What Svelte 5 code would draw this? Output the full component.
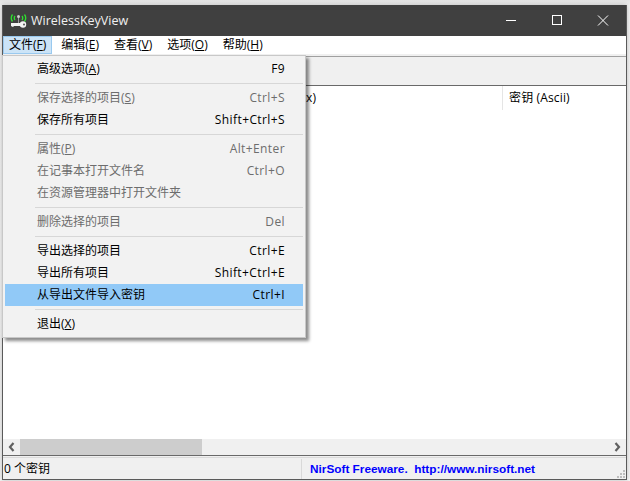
<script>
  const menus = [
    ['文件(', 'F', ')'], ['编辑(', 'E', ')'], ['查看(', 'V', ')'], ['选项(', 'O', ')'], ['帮助(', 'H', ')']
  ];
  const groups = [
    [{ t: '高级选项(', k: 'A', e: ')', s: 'F9' }],
    [
      { t: '保存选择的项目(', k: 'S', e: ')', s: 'Ctrl+S', off: true },
      { t: '保存所有项目', s: 'Shift+Ctrl+S' }
    ],
    [
      { t: '属性(', k: 'P', e: ')', s: 'Alt+Enter', off: true },
      { t: '在记事本打开文件名', s: 'Ctrl+O', off: true },
      { t: '在资源管理器中打开文件夹', off: true }
    ],
    [{ t: '删除选择的项目', s: 'Del', off: true }],
    [
      { t: '导出选择的项目', s: 'Ctrl+E' },
      { t: '导出所有项目', s: 'Shift+Ctrl+E' },
      { t: '从导出文件导入密钥', s: 'Ctrl+I', hot: true }
    ],
    [{ t: '退出(', k: 'X', e: ')' }]
  ];
</script>

<div class="screen">
  <div class="window">
    <header class="title">
      <svg class="logo" width="18" height="16" viewBox="0 0 18 16">
        <path d="M2.500 1.500Q0 5 2.500 8.500M5 3Q3.500 5 5 7M12 3Q13.500 5 12 7M14.500 1.500Q17 5 14.500 8.500" fill="none" stroke="#2fe02f" stroke-width="1.300"/>
        <rect x="8" y="4" width="1" height="6" fill="#9a9a9a"/>
        <circle cx="8.500" cy="3.500" r="1.500" fill="#cfcfcf"/>
        <path d="M1 10h9v3H4l-1 1-2-1z" fill="#f4f4f4"/>
        <circle cx="13" cy="11.500" r="3.200" fill="#f4f4f4"/>
        <circle cx="14" cy="11.500" r="1" fill="#555"/>
      </svg>
      <span class="name">WirelessKeyView</span>
      <div class="controls">
        <svg class="ctl" width="46" height="31" viewBox="0 0 46 31"><path d="M18 15.500h10" stroke="#fff"/></svg>
        <svg class="ctl" width="46" height="31" viewBox="0 0 46 31"><rect x="18.500" y="10.500" width="9" height="9" fill="none" stroke="#fff"/></svg>
        <svg class="ctl" width="46" height="31" viewBox="0 0 46 31"><path d="M18 10.500l10 10M28 10.500l-10 10" stroke="#fff" fill="none"/></svg>
      </div>
    </header>

    <nav class="menubar">
      {#each menus as m, i}
        <span class="top" class:open={i === 0}>{m[0]}<u>{m[1]}</u>{m[2]}</span>
      {/each}
    </nav>

    <div class="toolbar"></div>

    <div class="list">
      <div class="heads">
        <span class="head wide">x)</span>
        <span class="head">密钥 (Ascii)</span>
      </div>
      <div class="rows"></div>
      <div class="hscroll">
        <svg width="17" height="16" viewBox="0 0 17 16"><path d="M10.500 4L7 8l3.500 4" fill="none" stroke="#606060" stroke-width="2.200"/></svg>
        <div class="track"><div class="thumb"></div></div>
        <svg width="17" height="16" viewBox="0 0 17 16"><path d="M6.500 4L10 8l-3.500 4" fill="none" stroke="#606060" stroke-width="2.200"/></svg>
      </div>
    </div>

    <footer class="status">
      <span class="count">0 个密钥</span>
      <span class="link">NirSoft Freeware.&nbsp; http://www.nirsoft.net</span>
      <svg class="grip" width="10" height="10" viewBox="0 0 10 10" fill="#bdbdbd">
        <rect x="7" y="1" width="2" height="2"/><rect x="4" y="4" width="2" height="2"/><rect x="7" y="4" width="2" height="2"/>
        <rect x="1" y="7" width="2" height="2"/><rect x="4" y="7" width="2" height="2"/><rect x="7" y="7" width="2" height="2"/>
      </svg>
    </footer>

    <div class="menu">
      {#each groups as g, gi}
        {#if gi > 0}<div class="sep"></div>{/if}
        {#each g as it}
          <div class="item" class:off={it.off} class:hot={it.hot}>
            <span>{it.t}{#if it.k}<u>{it.k}</u>{it.e}{/if}</span>
            {#if it.s}<span class="keys">{it.s}</span>{/if}
          </div>
        {/each}
      {/each}
    </div>
  </div>
</div>

<style>
  :global(body) {
    margin: 0;
  }
  .screen {
    width: 630px;
    height: 481px;
    box-sizing: border-box;
    padding: 5px 3px 1px 2px;
    background: linear-gradient(#e4e4e4, #f4f4f4 6px, #f6f6f6);
    font-family: "Open Sans", "Noto Sans CJK SC", sans-serif;
    font-size: 12px;
    color: #000;
    overflow: hidden;
  }
  .window {
    position: relative;
    height: 475px;
    display: flex;
    flex-direction: column;
    box-sizing: border-box;
    border: solid #5a5a5a;
    border-width: 0 1px 1px;
    background: #f0f0f0;
    box-shadow: 0 0 5px rgba(0, 0, 0, 0.25);
  }
  .title {
    height: 31px;
    flex: none;
    display: flex;
    align-items: center;
    padding-left: 7px;
    background: #404040;
    color: #f0f0f0;
  }
  .logo {
    margin-right: 3px;
  }
  .name {
    font-size: 12.500px;
  }
  .controls {
    margin-left: auto;
    display: flex;
  }
  .ctl {
    display: block;
  }
  .menubar {
    height: 18px;
    flex: none;
    display: flex;
    background: #fff;
  }
  .top {
    height: 18px;
    line-height: 18px;
    padding: 0 6px;
    margin-right: 3px;
    box-sizing: border-box;
  }
  .top.open {
    background: #cce4f7;
    border: 1px solid #99c9ef;
    line-height: 16px;
    padding: 0 5px;
  }
  .toolbar {
    height: 29px;
    flex: none;
    margin-top: 2px;
    background: #f0f0f0;
    border-top: 1px solid #a0a0a0;
    box-sizing: border-box;
  }
  .list {
    flex: 1;
    display: flex;
    flex-direction: column;
    background: #fff;
    border-top: 1px solid #696969;
    border-bottom: 1px solid #696969;
    min-height: 0;
  }
  .heads {
    height: 24px;
    flex: none;
    display: flex;
  }
  .head {
    line-height: 24px;
    padding-left: 6px;
    flex: 1;
    border-left: 1px solid #e5e5e5;
    height: 24px;
    letter-spacing: 0.150px;
  }
  .head.wide {
    flex: none;
    width: 196px;
    margin-left: 303px;
    padding-left: 0;
    border-left: none;
    text-align: left;
  }
  .rows {
    flex: 1;
  }
  .hscroll {
    height: 16px;
    flex: none;
    display: flex;
    background: #f0f0f0;
  }
  .track {
    flex: 1;
  }
  .thumb {
    width: 182px;
    height: 16px;
    background: #cdcdcd;
  }
  .status {
    position: relative;
    height: 22px;
    flex: none;
    display: flex;
    align-items: center;
    box-sizing: border-box;
    border-top: 1px solid #dadada;
    margin-top: 1px;
  }
  .count {
    width: 299px;
    padding-left: 1px;
    box-sizing: border-box;
    height: 20px;
    line-height: 19px;
    border-right: 1px solid #d9d9d9;
  }
  .link {
    padding-left: 8px;
    font-family: "Liberation Sans", sans-serif;
    font-weight: bold;
    font-size: 11.800px;
    color: #0000ff;
  }
  .grip {
    position: absolute;
    right: 0;
    bottom: 0;
  }
  .menu {
    position: absolute;
    left: -1px;
    top: 50px;
    width: 304px;
    height: 283px;
    box-sizing: border-box;
    padding: 2px;
    background: #f2f2f2;
    border: 1px solid #c8c8c8;
    box-shadow: 3px 3px 3px rgba(0, 0, 0, 0.45);
  }
  .item {
    height: 22px;
    line-height: 22px;
    display: flex;
    justify-content: space-between;
    padding: 0 18px 0 32px;
    color: #000;
  }
  .keys {
    letter-spacing: 0.400px;
  }
  .item.off {
    color: #6d6d6d;
  }
  .item.hot {
    background: #91c9f7;
  }
  .sep {
    height: 1px;
    background: #d7d7d7;
    margin: 3px 0 3px 30px;
  }
</style>
